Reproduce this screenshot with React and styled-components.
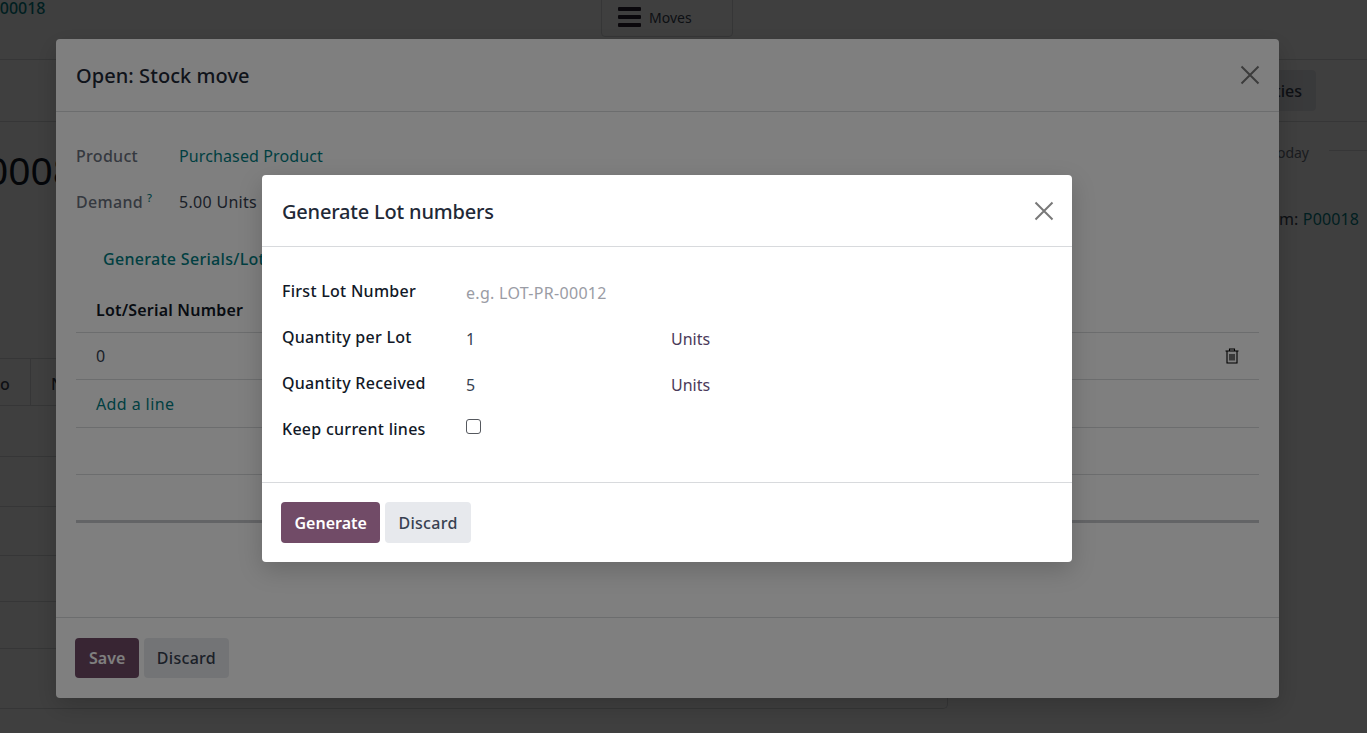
import React from 'react';
import styled, { createGlobalStyle } from 'styled-components';

const teal = '#017e84';
const purple = '#714b67';

const GlobalStyle = createGlobalStyle`
  html, body {
    margin: 0;
    height: 100%;
    overflow: hidden;
    background: #fff;
    font-family: "Noto Sans", "Liberation Sans", sans-serif;
    font-size: 16px;
    color: #374151;
  }
  * { box-sizing: border-box; }
`

const Page = styled.div`
  position: relative;
  width: 1367px;
  height: 733px;
  overflow: hidden;
  background: #fff;
`
const TopBar = styled.div`
  position: relative;
  height: 60px;
  border-bottom: 1px solid #d8dadd;
`
const Crumb = styled.a`
  display: block;
  margin-left: -10px;
  line-height: 17px;
  font-weight: 500;
  color: ${teal};
`
const MovesTab = styled.div`
  position: absolute;
  top: -1px;
  left: 601px;
  width: 132px;
  height: 38px;
  display: flex;
  align-items: center;
  gap: 8px;
  padding: 0 0 2px 16px;
  border: 1px solid #d8dadd;
  border-radius: 0 0 4px 4px;
  font-size: 14px;
  color: #374151;
`
const ActionBar = styled.div`
  height: 62px;
  display: flex;
  justify-content: flex-end;
  align-items: flex-start;
  padding: 10px 51px 0 0;
  border-bottom: 1px solid #d8dadd;
`
const GreyButton = styled.button`
  height: 41px;
  padding: 0 14px;
  border: 0;
  border-radius: 4px;
  background: #e7e9ed;
  color: #374151;
  font: 500 16px "Noto Sans", sans-serif;
`
const Columns = styled.div`
  display: flex;
`
const Sheet = styled.div`
  width: 948px;
  height: 587px;
  border-right: 1px solid #d8dadd;
  border-bottom: 1px solid #d8dadd;
  border-bottom-right-radius: 5px;
`
const BigName = styled.div`
  margin-left: -60px;
  padding-top: 23px;
  height: 236px;
  font-size: 39px;
  line-height: 50px;
  font-weight: 400;
  color: #111827;
  white-space: nowrap;
`
const BackRow = styled.div`
  display: flex;
  height: ${p => p.$h || 50}px;
  border-bottom: 1px solid #d8dadd;
  border-top: ${p => (p.$first ? '1px solid #d8dadd' : '0')};
`
const BackCell = styled.div`
  width: ${p => p.$w}px;
  padding: 14px 0 0 ${p => p.$pad}px;
  border-right: 1px solid #d8dadd;
  font-weight: 500;
`
const Chatter = styled.div`
  flex: 1;
  padding-top: 20px;
`
const DayRow = styled.div`
  display: flex;
  align-items: center;
  justify-content: flex-end;
  gap: 20px;
  height: 20px;
  font-size: 14px;
  color: #6b7280;
`
const DayLine = styled.div`
  width: 38px;
  height: 1px;
  margin-bottom: 4px;
  background: #d8dadd;
`
const ChatterText = styled.div`
  margin-top: 46px;
  padding-right: 8px;
  text-align: right;
  letter-spacing: 0.15px;
  color: #374151;
`
const Backdrop = styled.div`
  position: absolute;
  inset: 0;
  background: rgba(0, 0, 0, 0.5);
`
const Modal = styled.div`
  position: absolute;
  left: ${p => p.$left}px;
  top: ${p => p.$top}px;
  width: ${p => p.$width}px;
  height: ${p => p.$height}px;
  display: flex;
  flex-direction: column;
  background: #fff;
  border-radius: 4px;
  box-shadow: 0 8px 24px rgba(0, 0, 0, 0.18);
  overflow: hidden;
`
const ModalHeader = styled.div`
  height: ${p => p.$h}px;
  flex: none;
  display: flex;
  align-items: center;
  justify-content: space-between;
  padding: 0 ${p => p.$pr}px 0 20px;
  border-bottom: 1px solid #d8dadd;
`
const ModalTitle = styled.div`
  padding-top: ${p => p.$pt || 0}px;
  font-size: 20px;
  font-weight: 500;
  letter-spacing: ${p => p.$ls || 0}px;
  color: #1f2937;
`
const CloseIcon = styled.svg`
  display: block;
  width: 20px;
  height: 20px;
  stroke: #787878;
  stroke-width: 2;
  fill: none;
`
const ModalBody = styled.div`
  flex: 1;
  min-height: 0;
`
const ModalFooter = styled.div`
  flex: none;
  height: ${p => p.$h}px;
  display: flex;
  gap: 5px;
  padding: ${p => p.$pt}px 19px 0;
  border-top: 1px solid #d8dadd;
`
const PrimaryButton = styled.button`
  height: ${p => p.$h}px;
  padding: 0 ${p => p.$px}px;
  border: 0;
  border-radius: 4px;
  background: ${purple};
  color: #fff;
  font: 600 16px "Noto Sans", sans-serif;
`
const SecondaryButton = styled(GreyButton)`
  height: ${p => p.$h}px;
  padding: 0 ${p => p.$px}px;
  letter-spacing: 0.3px;
`
const StockBody = styled(ModalBody)`
  padding: 33px 20px 0;
`
const InfoRow = styled.div`
  display: flex;
  height: 46px;
  align-items: flex-start;
`
const InfoLabel = styled.div`
  width: 103px;
  font-weight: 500;
  letter-spacing: 0.3px;
  color: #6b7280;
  line-height: 22px;
  white-space: nowrap;
`
const Help = styled.sup`
  margin-left: 4px;
  font-size: 11px;
  line-height: 0;
  color: ${teal};
`
const InfoValue = styled.a`
  line-height: 22px;
  letter-spacing: ${p => (p.$link ? 0.12 : 0.3)}px;
  color: ${p => (p.$link ? teal : '#374151')};
`
const GenerateLink = styled.div`
  margin-left: 27px;
  padding-top: 11px;
  height: 50px;
  font-weight: 500;
  line-height: 22px;
  letter-spacing: 0.3px;
  color: ${teal};
  white-space: nowrap;
`
const LineRow = styled.div`
  height: ${p => p.$h}px;
  display: flex;
  align-items: center;
  justify-content: space-between;
  padding: 0 20px;
  border-bottom: ${p => p.$thick ? 3 : 1}px solid ${p => p.$thick ? '#c6c8cc' : '#d8dadd'};
  color: ${p => p.$color || '#374151'};
  font-weight: ${p => p.$bold ? 600 : 400};
  letter-spacing: ${p => p.$ls || 0}px;
`
const LotBody = styled(ModalBody)`
  padding: 33px 20px 0;
  display: grid;
  grid-template-columns: 184px 205px 1fr;
  grid-auto-rows: 46px;
`
const LotLabel = styled.div`
  line-height: 22px;
  font-weight: 500;
  letter-spacing: 0.27px;
  color: #111827;
  white-space: nowrap;
`
const LotValue = styled.div`
  line-height: 22px;
  padding-top: 2px;
  letter-spacing: ${p => (p.$placeholder ? 0.3 : 0)}px;
  color: ${p => (p.$placeholder ? '#9a9ca5' : '#374151')};
`
const LotUnit = styled.div`
  line-height: 22px;
  padding-top: 2px;
  color: #4b3a5a;
`
const Check = styled.span`
  display: block;
  width: 15px;
  height: 15px;
  margin-top: 1px;
  border: 1px solid #55585e;
  border-radius: 3px;
  background: #fff;
`

const Close = () => (
  <CloseIcon viewBox="0 0 20 20">
    <path d="M1.5 1.5 L18.5 18.5 M18.5 1.5 L1.5 18.5" />
  </CloseIcon>
)

const Trash = () => (
  <svg width="14" height="16" viewBox="0 0 14 16" fill="none" stroke="#000" strokeWidth="1.1">
    <path d="M0.5 3 H13.5 M4.5 3 V1 H9.5 V3" />
    <path d="M2 3 V15 H12 V3" />
    <path d="M5 6 V12.5 M7 6 V12.5 M9 6 V12.5" />
  </svg>
)

const Hamburger = () => (
  <svg width="23" height="20" viewBox="0 0 23 20" fill="#2a2030">
    <rect x="0" y="0" width="23" height="4" rx="1" />
    <rect x="0" y="8" width="23" height="4" rx="1" />
    <rect x="0" y="16" width="23" height="4" rx="1" />
  </svg>
)

const App = () => (
  <Page>
    <GlobalStyle />
    <TopBar>
      <Crumb>P00018</Crumb>
      <MovesTab><Hamburger />Moves</MovesTab>
    </TopBar>
    <ActionBar><GreyButton>Traceabilities</GreyButton></ActionBar>
    <Columns>
      <Sheet>
        <BigName>P00008</BigName>
        <BackRow $h={48} $first>
          <BackCell $w={31} $pad={0}>o</BackCell>
          <BackCell $w={80} $pad={20}>N</BackCell>
        </BackRow>
        <BackRow $h={51} />
        <BackRow $h={50} />
        <BackRow $h={49} />
        <BackRow $h={46} />
        <BackRow $h={47} />
      </Sheet>
      <Chatter>
        <DayRow>Today<DayLine /></DayRow>
        <ChatterText>From: <InfoValue $link>P00018</InfoValue></ChatterText>
      </Chatter>
    </Columns>

    <Backdrop />
    <Modal $left={56} $top={39} $width={1223} $height={659}>
      <ModalHeader $h={73} $pr={19}>
        <ModalTitle $ls={0.06}>Open: Stock move</ModalTitle>
        <Close />
      </ModalHeader>
      <StockBody>
        <InfoRow>
          <InfoLabel>Product</InfoLabel>
          <InfoValue $link>Purchased Product</InfoValue>
        </InfoRow>
        <InfoRow>
          <InfoLabel>Demand<Help>?</Help></InfoLabel>
          <InfoValue>5.00 Units</InfoValue>
        </InfoRow>
        <GenerateLink>Generate Serials/Lots</GenerateLink>
        <LineRow $h={46} $bold $ls={0.2} $color="#111827">Lot/Serial Number</LineRow>
        <LineRow $h={47}>0<Trash /></LineRow>
        <LineRow $h={48} $ls={0.4} $color={teal}>Add a line</LineRow>
        <LineRow $h={47} />
        <LineRow $h={48} $thick />
      </StockBody>
      <ModalFooter $h={81} $pt={20}>
        <PrimaryButton $h={40} $px={14}>Save</PrimaryButton>
        <SecondaryButton $h={40} $px={12.5}>Discard</SecondaryButton>
      </ModalFooter>
    </Modal>

    <Backdrop />
    <Modal $left={262} $top={175} $width={810} $height={387}>
      <ModalHeader $h={72} $pr={18}>
        <ModalTitle $ls={-0.2} $pt={2}>Generate Lot numbers</ModalTitle>
        <Close />
      </ModalHeader>
      <LotBody>
        <LotLabel>First Lot Number</LotLabel>
        <LotValue $placeholder>e.g. LOT-PR-00012</LotValue>
        <span />
        <LotLabel>Quantity per Lot</LotLabel>
        <LotValue>1</LotValue>
        <LotUnit>Units</LotUnit>
        <LotLabel>Quantity Received</LotLabel>
        <LotValue>5</LotValue>
        <LotUnit>Units</LotUnit>
        <LotLabel>Keep current lines</LotLabel>
        <Check />
      </LotBody>
      <ModalFooter $h={80} $pt={19}>
        <PrimaryButton $h={41} $px={13.5}>Generate</PrimaryButton>
        <SecondaryButton $h={41} $px={13}>Discard</SecondaryButton>
      </ModalFooter>
    </Modal>
  </Page>
);

export default App;
